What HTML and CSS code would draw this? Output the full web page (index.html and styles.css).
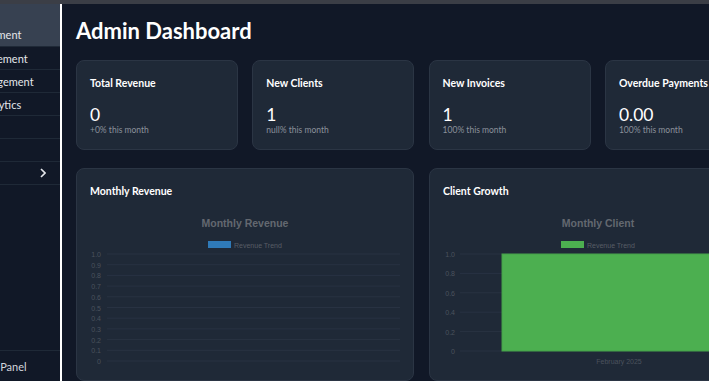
FILE: index.html
```html
<!DOCTYPE html>
<html lang="en">
  <head>
    <meta charset="UTF-8" />
    <meta name="viewport" content="width=device-width, initial-scale=1.0" />
    <title>Admin Dashboard</title>
    <link rel="stylesheet" href="styles.css">
  </head>
  <body>
    <div class="top-strip"></div>

    <div class="layout">
      <aside class="sidebar">
        <nav class="nav">
          <a class="nav-item nav-item-active">User Management</a>
          <a class="nav-item">Client Management</a>
          <a class="nav-item">Invoice Management</a>
          <a class="nav-item">Revenue Analytics</a>
          <a class="nav-item">Reports</a>
          <a class="nav-item">Payments</a>
          <a class="nav-item nav-dropdown">
            Settings
            <svg class="chevron" width="6" height="10" viewBox="0 0 6 10">
              <polyline points="1,1 5,5 1,9" fill="none" stroke="#e5e7eb" stroke-width="1.6" />
            </svg>
          </a>
        </nav>
        <div class="sidebar-footer">Admin Panel</div>
      </aside>

      <main class="main">
        <h1 class="title">Admin Dashboard</h1>

        <div class="stats">
          <div class="card stat-card">
            <p class="card-title">Total Revenue</p>
            <p class="stat-value">0</p>
            <p class="stat-change">+0% this month</p>
          </div>
          <div class="card stat-card">
            <p class="card-title">New Clients</p>
            <p class="stat-value">1</p>
            <p class="stat-change">null% this month</p>
          </div>
          <div class="card stat-card">
            <p class="card-title">New Invoices</p>
            <p class="stat-value">1</p>
            <p class="stat-change">100% this month</p>
          </div>
          <div class="card stat-card">
            <p class="card-title">Overdue Payments</p>
            <p class="stat-value">0.00</p>
            <p class="stat-change">100% this month</p>
          </div>
        </div>

        <div class="charts">
          <div class="card chart-card">
            <p class="card-title">Monthly Revenue</p>
            <svg class="chart" width="310" height="170" viewBox="0 0 310 170">
              <text class="chart-title" x="155" y="22">Monthly Revenue</text>
              <rect x="118" y="36" width="23" height="7" fill="#2f7ab8" />
              <text class="chart-legend" x="144" y="42.5">Revenue Trend</text>
              <g class="grid">
                <line x1="17" y1="49" x2="310" y2="49" />
                <line x1="17" y1="59.7" x2="310" y2="59.7" />
                <line x1="17" y1="70.4" x2="310" y2="70.4" />
                <line x1="17" y1="81.1" x2="310" y2="81.1" />
                <line x1="17" y1="91.8" x2="310" y2="91.8" />
                <line x1="17" y1="102.5" x2="310" y2="102.5" />
                <line x1="17" y1="113.2" x2="310" y2="113.2" />
                <line x1="17" y1="123.9" x2="310" y2="123.9" />
                <line x1="17" y1="134.6" x2="310" y2="134.6" />
                <line x1="17" y1="145.3" x2="310" y2="145.3" />
                <line x1="17" y1="156" x2="310" y2="156" />
              </g>
              <g class="axis-label">
                <text x="11" y="52">1.0</text>
                <text x="11" y="62.7">0.9</text>
                <text x="11" y="73.4">0.8</text>
                <text x="11" y="84.1">0.7</text>
                <text x="11" y="94.8">0.6</text>
                <text x="11" y="105.5">0.5</text>
                <text x="11" y="116.2">0.4</text>
                <text x="11" y="126.9">0.3</text>
                <text x="11" y="137.6">0.2</text>
                <text x="11" y="148.3">0.1</text>
                <text x="11" y="159">0</text>
              </g>
            </svg>
          </div>

          <div class="card chart-card">
            <p class="card-title">Client Growth</p>
            <svg class="chart" width="310" height="170" viewBox="0 0 310 170">
              <text class="chart-title" x="155" y="22">Monthly Client</text>
              <rect x="118" y="36" width="23" height="7" fill="#4caf50" />
              <text class="chart-legend" x="144" y="42.5">Revenue Trend</text>
              <g class="grid">
                <line x1="17" y1="49" x2="310" y2="49" />
                <line x1="17" y1="68.4" x2="310" y2="68.4" />
                <line x1="17" y1="87.8" x2="310" y2="87.8" />
                <line x1="17" y1="107.2" x2="310" y2="107.2" />
                <line x1="17" y1="126.6" x2="310" y2="126.6" />
                <line x1="17" y1="146" x2="310" y2="146" />
              </g>
              <rect x="59" y="49" width="234" height="97" fill="#4caf50" stroke="#44a048" stroke-width="1" />
              <g class="axis-label">
                <text x="12" y="52">1.0</text>
                <text x="12" y="71.4">0.8</text>
                <text x="12" y="90.8">0.6</text>
                <text x="12" y="110.2">0.4</text>
                <text x="12" y="129.6">0.2</text>
                <text x="12" y="149">0</text>
              </g>
              <text class="axis-label-x" x="176" y="159">February 2025</text>
            </svg>
          </div>
        </div>
      </main>
    </div>
  </body>
</html>
```

FILE: styles.css
```css
body{
  margin: 0;
  background-color: #111827;
  color: white;
  font-family: Lato, "Noto Sans", sans-serif;
  overflow: hidden;
}

p{
  margin: 0;
}

.top-strip{
  height: 4px;
  background-color: #3b3e46;
}

.layout{
  display: flex;
  height: 377px;
}

.sidebar{
  flex: none;
  width: 240px;
  margin-left: -180px;
  border-right: 2px solid white;
  background-color: #111827;
  display: flex;
  flex-direction: column;
}

.nav{
  display: flex;
  flex-direction: column;
  flex: 1;
}

.nav-item{
  display: flex;
  align-items: center;
  height: 22px;
  padding-left: 113px;
  border-bottom: 1px solid #1f2937;
  color: #e5e7eb;
  font-size: 11px;
  cursor: pointer;
}

.nav-item-active{
  height: 24px;
  padding-top: 18px;
  background-color: #374151;
}

.nav-dropdown{
  justify-content: space-between;
  padding-right: 14px;
}

.sidebar-footer{
  height: 30px;
  display: flex;
  align-items: center;
  padding-left: 146px;
  border-top: 1px solid #1f2937;
  color: #d1d5db;
  font-size: 11px;
}

.main{
  flex: none;
  width: 720px;
  padding: 11px 14px;
}

.title{
  margin: 0 0 13px;
  font-size: 22px;
  line-height: 32px;
  font-weight: bold;
}

.card{
  background-color: #1f2937;
  border: 1px solid #2b3544;
  border-radius: 8px;
  box-sizing: border-box;
}

.stats{
  display: grid;
  grid-template-columns: repeat(4, 162px);
  gap: 14.3px;
}

.stat-card{
  height: 90px;
  padding: 14px 13px;
}

.card-title{
  font-size: 10.5px;
  font-weight: bold;
  line-height: 16px;
}

.stat-value{
  margin-top: 14px;
  font-size: 17.5px;
  line-height: 20px;
}

.stat-change{
  font-size: 8.5px;
  color: #8b919b;
}

.charts{
  display: grid;
  grid-template-columns: repeat(2, 338px);
  gap: 15px;
  margin-top: 18px;
}

.chart-card{
  height: 213px;
  padding: 14px 13px;
}

.chart{
  display: block;
  margin-top: 6px;
  font-family: "Liberation Sans", Arial, sans-serif;
}

.chart-title{
  font-size: 10.5px;
  font-weight: bold;
  fill: #636870;
  text-anchor: middle;
}

.chart-legend{
  font-size: 7px;
  fill: #585d66;
}

.grid line{
  stroke: #283242;
  stroke-width: 1;
}

.axis-label text{
  font-size: 7px;
  fill: #4b525d;
  text-anchor: end;
}

.axis-label-x{
  font-size: 7px;
  fill: #4b525d;
  text-anchor: middle;
}
```
